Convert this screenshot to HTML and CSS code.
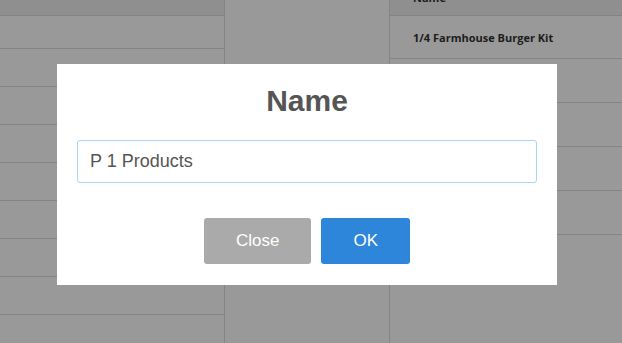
FILE: index.html
```html
<!DOCTYPE html>
<html lang="en">
<head>
    <meta charset="UTF-8">
    <meta name="viewport" content="width=device-width, initial-scale=1.0">
    <title>Products</title>
    <link rel="stylesheet" href="styles.css">
</head>
<body>
    <div class="page">
        <!-- Left column -->
        <div class="col col-left">
            <div class="head"></div>
            <div class="row row-first"></div>
            <div class="row"></div>
            <div class="row"></div>
            <div class="row"></div>
            <div class="row"></div>
            <div class="row"></div>
            <div class="row"></div>
            <div class="row"></div>
        </div>

        <!-- Middle column -->
        <div class="col col-mid"></div>

        <!-- Right column -->
        <div class="col col-right">
            <div class="head">Name</div>
            <div class="item item-first">1/4 Farmhouse Burger Kit</div>
            <div class="item"></div>
            <div class="item"></div>
            <div class="item"></div>
            <div class="item"></div>
        </div>
    </div>

    <!-- Name dialog -->
    <div class="overlay">
        <div class="modal">
            <h2 class="modal-title">Name</h2>
            <input type="text" class="modal-input" value="P 1 Products">
            <div class="modal-actions">
                <button type="button" class="btn btn-close">Close</button>
                <button type="button" class="btn btn-ok">OK</button>
            </div>
        </div>
    </div>
</body>
</html>
```

FILE: styles.css
```css
body {
    margin: 0;
    padding: 0;
    background: #fff;
    font-family: "Liberation Sans", Arial, sans-serif;
    overflow: hidden;
    height: 343px;
}
.page {
    display: flex;
    margin-top: -24px;
    height: 367px;
    overflow: hidden;
}
.col {
    box-sizing: border-box;
}
.col-left {
    width: 225px;
    border-right: 1px solid #ddd;
}
.col-mid {
    width: 165px;
    border-right: 1px solid #ddd;
}
.col-right {
    flex: 1;
}
.head {
    height: 40px;
    background: #eee;
    border-bottom: 1px solid #ddd;
    font-family: "Open Sans", sans-serif;
    font-weight: bold;
    font-size: 11px;
    color: #333;
    padding: 14px 0 0 23px;
    box-sizing: border-box;
}
.row {
    height: 38px;
    border-bottom: 1px solid #ddd;
    box-sizing: border-box;
}
.row-first {
    height: 33px;
}
.item {
    height: 44px;
    border-bottom: 1px solid #ddd;
    box-sizing: border-box;
    display: flex;
    align-items: center;
    padding-left: 23px;
    font-family: "Open Sans", sans-serif;
    font-weight: bold;
    font-size: 11px;
    color: #333;
}
.item-first {
    height: 43px;
}
.overlay {
    position: fixed;
    top: 0;
    left: 0;
    right: 0;
    bottom: 0;
    background: rgba(0, 0, 0, 0.4);
    padding: 64px 0 0 57px;
}
.modal {
    width: 500px;
    height: 221px;
    background: #fff;
    padding: 20px 20px 0;
    box-sizing: border-box;
}
.modal-title {
    margin: 0 0 22px;
    text-align: center;
    font-size: 30px;
    line-height: 34px;
    font-weight: bold;
    color: #555;
}
.modal-input {
    display: block;
    width: 460px;
    height: 43px;
    box-sizing: border-box;
    border: 1px solid #a9d6ee;
    border-radius: 3px;
    padding: 0 12px;
    font-family: "Liberation Sans", Arial, sans-serif;
    font-size: 18px;
    color: #555;
    outline: none;
}
.modal-actions {
    display: flex;
    justify-content: center;
    gap: 10px;
    margin-top: 35px;
}
.btn {
    height: 46px;
    padding: 0 32px;
    border: none;
    border-radius: 3px;
    color: #fff;
    font-family: "Liberation Sans", Arial, sans-serif;
    font-size: 17px;
    cursor: pointer;
}
.btn-close {
    background: #aaa;
}
.btn-ok {
    background: #2e86da;
}
```
